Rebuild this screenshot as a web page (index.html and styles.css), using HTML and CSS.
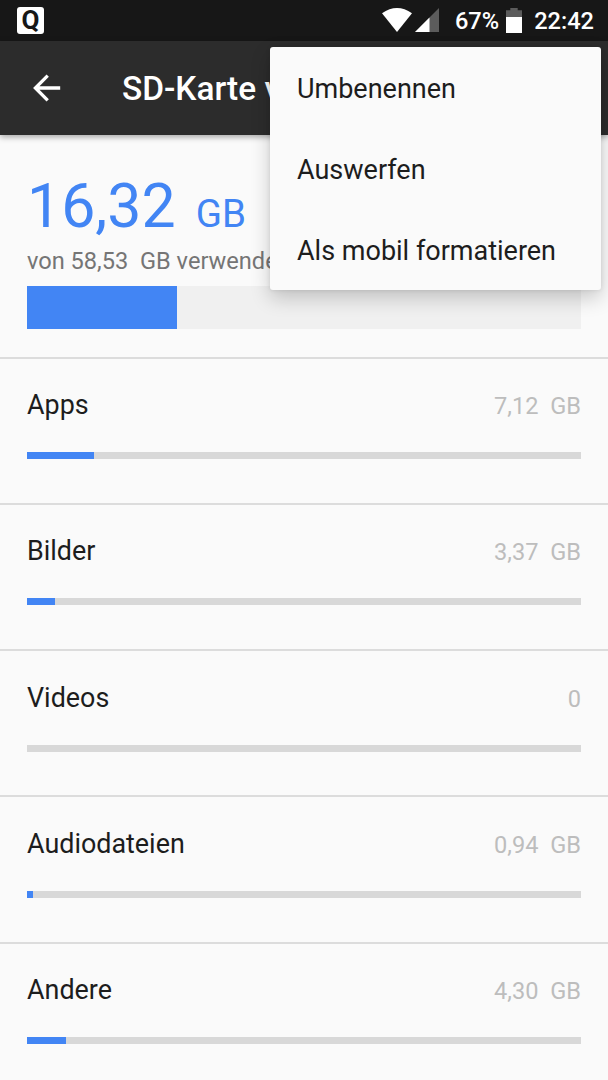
FILE: index.html
```
<!DOCTYPE html>
<html lang="de">
<head>
    <meta charset="UTF-8">
    <meta name="viewport" content="width=device-width, initial-scale=1.0">
    <title>SD-Karte</title>
    <link rel="stylesheet" href="styles.css">
</head>
<body>
    <div class="status-bar">
        <span class="notification">Q</span>
        <svg class="wifi" width="30" height="24" viewBox="0 0 30 24"><path d="M0 5.200Q15-5.200 30 5.200L15 24z" fill="#fff"/></svg>
        <svg class="signal" width="24" height="24" viewBox="0 0 24 24"><path d="M0 24L24 0V24z" fill="#5c5c5c"/><path d="M0 24L14.500 9.500V24z" fill="#fff"/></svg>
        <span class="percent">67%</span>
        <svg class="battery" width="16" height="25" viewBox="0 0 16 25"><path d="M0 2.200H4.300V0H11.700V2.200H16V9H0z" fill="#5c5c5c"/><path d="M0 9H16V25H0z" fill="#fff"/></svg>
        <span class="clock">22:42</span>
    </div>

    <header class="toolbar">
        <svg class="back" width="28" height="28" viewBox="0 0 28 28" fill="none" stroke="#fff" stroke-width="3.300"><path d="M27.200 14H3M14.700 1.700L2.400 14L14.700 26.300"/></svg>
        <h1>SD-Karte v</h1>
    </header>

    <div class="menu">
        <div class="menu-item">Umbenennen</div>
        <div class="menu-item">Auswerfen</div>
        <div class="menu-item">Als mobil formatieren</div>
    </div>

    <main>
        <section class="summary">
            <div class="used">16,32 <span class="unit">GB</span></div>
            <div class="total">von 58,53&nbsp; GB verwendet</div>
            <div class="total-bar"><div class="fill" style="width: 27.1%"></div></div>
        </section>

        <section class="category">
            <div class="label"><h2>Apps</h2><span class="size">7,12&nbsp; GB</span></div>
            <div class="bar"><div class="fill" style="width: 12.1%"></div></div>
        </section>
        <section class="category">
            <div class="label"><h2>Bilder</h2><span class="size">3,37&nbsp; GB</span></div>
            <div class="bar"><div class="fill" style="width: 5.1%"></div></div>
        </section>
        <section class="category">
            <div class="label"><h2>Videos</h2><span class="size">0</span></div>
            <div class="bar"></div>
        </section>
        <section class="category">
            <div class="label"><h2>Audiodateien</h2><span class="size">0,94&nbsp; GB</span></div>
            <div class="bar"><div class="fill" style="width: 1.1%"></div></div>
        </section>
        <section class="category">
            <div class="label"><h2>Andere</h2><span class="size">4,30&nbsp; GB</span></div>
            <div class="bar"><div class="fill" style="width: 7.1%"></div></div>
        </section>
    </main>
</body>
</html>
```
FILE: styles.css
```
* { box-sizing: border-box; }
body { position: relative; margin: 0; height: 1080px; overflow: hidden; background-color: #fafafa; color: #1d1d1d; font-family: Roboto, sans-serif; }
h1, h2 { margin: 0; }
svg { display: block; flex: none; }

.status-bar { display: flex; align-items: flex-start; height: 41px; padding: 8px 14px 0 17px; background-color: #171717; color: #fff; font-size: 23.6px; font-weight: 500; line-height: 27px; }
.notification { width: 27px; height: 27px; margin-top: -1px; margin-right: auto; border-radius: 3px; background-color: #fff; color: #171717; font: bold 26px/27px Roboto, sans-serif; text-align: center; }
.signal { margin-left: 3px; }
.percent { margin-left: 16px; }
.battery { margin-left: 7px; }
.clock { margin-left: 12px; }

.toolbar { display: flex; align-items: center; height: 94px; padding-left: 33px; background-color: #2c2c2c; box-shadow: 0 2px 6px rgba(0,0,0,0.35); }
.toolbar h1 { margin: 1px 0 0 61px; color: #fff; font-size: 33.4px; font-weight: 500; white-space: nowrap; }

.menu { position: absolute; top: 47px; right: 7px; z-index: 1; width: 331px; height: 243px; border-radius: 3px; background-color: #fafafa; box-shadow: 0 8px 20px rgba(0,0,0,0.2), 0 0 4px rgba(0,0,0,0.1); }
.menu-item { height: 81px; padding-left: 27px; font-size: 27px; line-height: 85px; }

.summary { height: 221.500px; padding: 36px 27px 0; }
.used { height: 72px; color: #4285f4; font-size: 60.8px; line-height: 72px; white-space: nowrap; }
.unit { margin-left: 5px; font-size: 38.5px; }
.total { height: 43px; color: #757575; font-size: 23.6px; line-height: 37px; }
.total-bar { height: 43px; background-color: #f0f0f0; }
.fill { height: 100%; background-color: #4285f4; }

.category { height: 146.25px; padding: 28.500px 27px 0; border-top: 2px solid #dcdcdc; }
.label { display: flex; justify-content: space-between; align-items: baseline; height: 65px; }
.label h2 { font-size: 26.9px; font-weight: 400; line-height: 36px; }
.size { color: #bdbdbd; font-size: 23.6px; }
.bar { height: 7px; background-color: #d8d8d8; }
```
